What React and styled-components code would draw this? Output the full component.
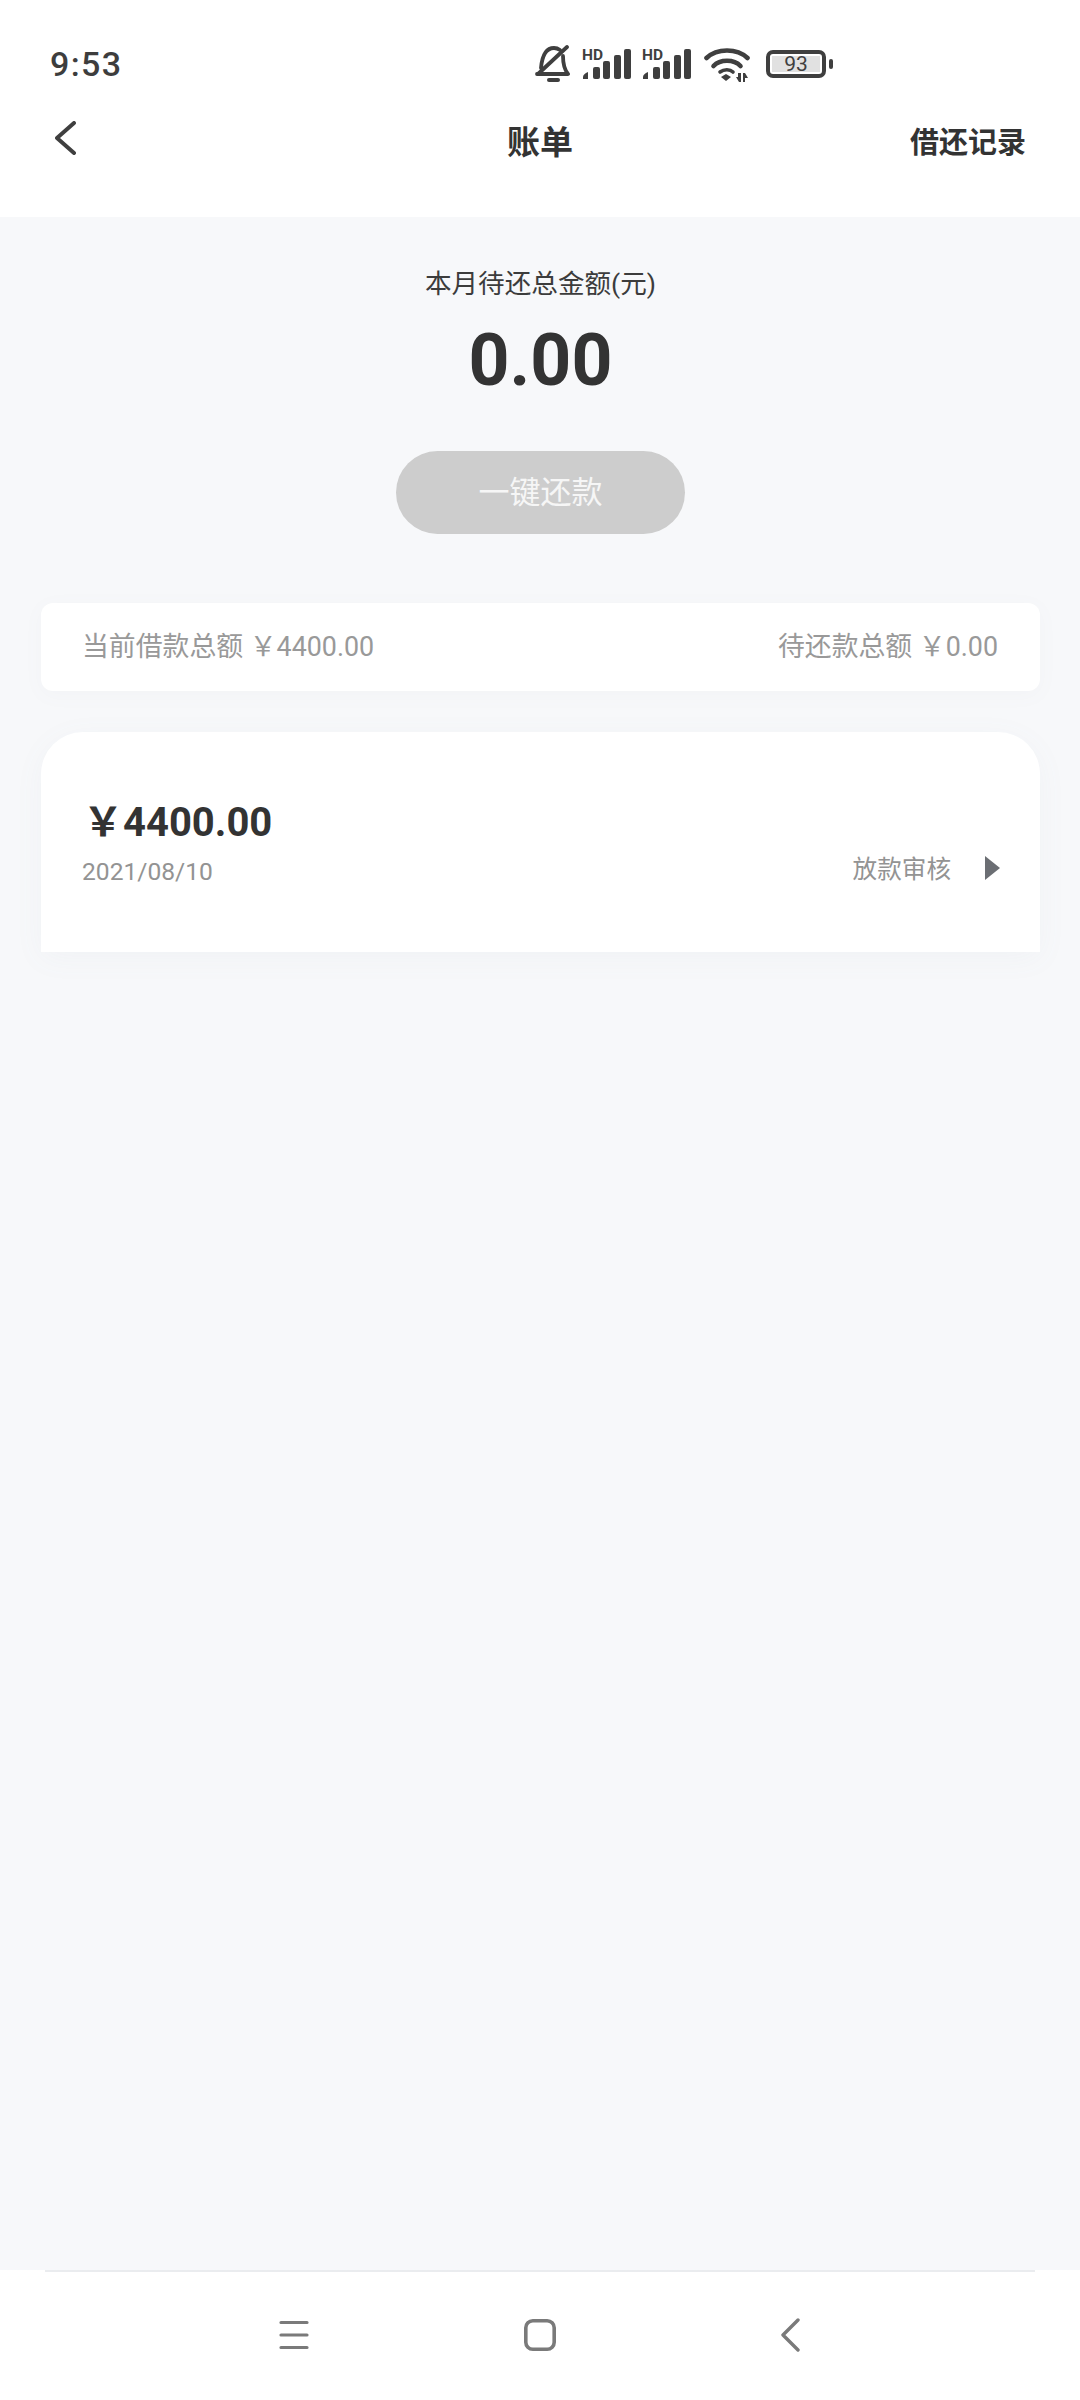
import React from "react";
import styled, { createGlobalStyle } from "styled-components";

const Global = createGlobalStyle`
  html, body { margin: 0; padding: 0; background: #f7f8fa; }
  body { font-family: Roboto, "Noto Sans CJK SC", sans-serif; }
  * { box-sizing: border-box; }
`;
const Screen = styled.div`
  width: 1080px; height: 2400px; display: flex; flex-direction: column; background: #f7f8fa; overflow: hidden;
`;
const TopArea = styled.header`
  height: 217px; background: #fff; padding: 0 54px; flex: none;
`;
const StatusBar = styled.div`
  height: 94px; padding-top: 42px; display: flex; align-items: flex-start;
`;
const Time = styled.span`
  margin-left: -4px; font: 500 34px/44px Roboto, sans-serif; color: #3d3d3d; letter-spacing: 1.4px;
`;
const StatusIcons = styled.div`
  margin: 0 200px 0 auto; display: flex; align-items: center; height: 44px;
`;
const IconSlot = styled.span`
  display: flex; margin-left: ${(p) => p.$gap}px;
`;
const NavRow = styled.div`
  display: grid; grid-template-columns: 1fr auto 1fr; align-items: center; height: 98px;
`;
const BackButton = styled.div` display: flex; margin: 0 0 10px 1px; `;
const Title = styled.h1`
  margin: 0; font: 700 33px/46px Roboto, "Noto Sans CJK SC", sans-serif; color: #333;
`;
const RecordLink = styled.span`
  justify-self: end; font: 700 29px/46px Roboto, "Noto Sans CJK SC", sans-serif; color: #333;
`;
const Main = styled.main`
  flex: 1; padding: 0 40px 0 41px; display: flex; flex-direction: column;
`;
const Summary = styled.section`
  display: flex; flex-direction: column; align-items: center; padding-top: 48px;
`;
const SummaryLabel = styled.div`
  font: 400 26.6px/38px Roboto, "Noto Sans CJK SC", sans-serif; color: #3c3c3c;
`;
const SummaryValue = styled.div`
  font: 700 71.5px/84px Roboto, sans-serif; color: #333; margin-top: 16px;
`;
const PayButton = styled.button`
  width: 289px; height: 83px; margin-top: 48px; border: 0; border-radius: 42px; background: #cdcdcd; color: #f6f6f6;
  font: 400 31px/83px Roboto, "Noto Sans CJK SC", sans-serif; padding: 0;
`;
const InfoBar = styled.section`
  margin-top: 69px; height: 88px; background: #fff; border-radius: 12px; padding: 0 42px 0 41px; display: flex; align-items: center; justify-content: space-between;
  font: 400 26.85px/38px Roboto, "Noto Sans CJK SC", sans-serif; color: #999;
  box-shadow: 0 4px 20px rgba(120, 130, 150, 0.04);
`;
const LoanCard = styled.article`
  margin-top: 41px; height: 220px; background: #fff; border-radius: 42px 42px 0 0; padding: 66px 40px 0 41px; display: flex; justify-content: space-between;
  box-shadow: 0 6px 30px rgba(120, 130, 150, 0.05);
`;
const LoanAmount = styled.div`
  font: 700 40px/50px Roboto, "Noto Sans CJK SC", sans-serif; color: #333; padding-left: 1px;
`;
const LoanDate = styled.div`
  font: 400 24.6px/34px Roboto, sans-serif; color: #939393; margin-top: 7px;
`;
const LoanStatus = styled.div`
  display: flex; align-items: center; gap: 34px; align-self: flex-start; margin-top: 55px;
  font: 400 24.6px/34px Roboto, "Noto Sans CJK SC", sans-serif; color: #939393;
`;
const Triangle = styled.svg` width: 15px; height: 24px; margin-top: -4px; display: block; `;
const BottomNav = styled.nav`
  height: 130px; flex: none; background: #fff; position: relative; display: flex; align-items: center; padding: 0 280px 0 279px; justify-content: space-between;
  &::before { content: ""; position: absolute; left: 45px; right: 45px; top: 0; height: 2px; background: #eaecef; }
`;
const HomeIcon = styled.svg` margin-right: 10px; display: block; `;

const Bell = () => (
  <svg width="36" height="38" viewBox="0 0 36 38" fill="none" stroke="#3f3f3f" strokeWidth="3.8" strokeLinecap="round" strokeLinejoin="round">
    <path d="M7 23C8 12 11 3 20 3c2 0 4 .6 6 2" />
    <path d="M29 11c0 8 1 13 5 18H3" />
    <path d="M33 2 4 29" />
    <path d="M15 35h9" strokeWidth="4" />
  </svg>
);
const Signal = () => (
  <svg width="50" height="36" viewBox="0 0 50 36" fill="#3f3f3f">
    <text x="1" y="14" fontFamily="Roboto, sans-serif" fontWeight="700" fontSize="15.5">HD</text>
    <path d="M2 33v-2c0-2 2-4 5-5v7z" />
    <rect x="12" y="21" width="7" height="12" rx="2" />
    <rect x="22" y="15" width="7" height="18" rx="2" />
    <rect x="33" y="9" width="7" height="24" rx="2" />
    <rect x="43" y="3" width="7" height="30" rx="2" />
  </svg>
);
const Wifi = () => (
  <svg width="46" height="36" viewBox="0 0 46 36" fill="none" stroke="#3f3f3f" strokeWidth="4.6" strokeLinecap="round">
    <path d="M2.5 12C13 2 33 2 43.5 12" />
    <path d="M9.5 20C16 13 30 13 36.5 20" />
    <path d="M16 26c4-3 10-3 13 0" strokeWidth="3.6" />
    <path d="M17 31l5-3 5 3-5 4z" fill="#3f3f3f" stroke="none" />
    <path d="M32 31h2v-4h3v9h-2zM39 27h2l3 5h-3v4h-2z" fill="#3f3f3f" stroke="none" />
  </svg>
);
const BatteryFrame = styled.div`
  margin-left: 16px; width: 60px; height: 28px; border: 4px solid #3f3f3f; border-radius: 7px; padding: 2px; position: relative;
  &::after { content: ""; position: absolute; right: -11px; top: 5px; width: 4px; height: 10px; border-radius: 2px; background: #3f3f3f; }
`;
const BatteryLevel = styled.div`
  height: 100%; background: #e1e1e1; font: 400 21px/16px Roboto, sans-serif; color: #3f3f3f; text-align: center;
`;
const Chevron = ({ size = 34, color = "#3f3f3f", w = 21, sw = 4 }) => (
  <svg width={w} height={size} viewBox={`0 0 ${w} ${size}`} fill="none" stroke={color} strokeWidth={sw} strokeLinecap="round" strokeLinejoin="round">
    <path d={`M${w - 2} 2 L2 ${size / 2} L${w - 2} ${size - 2}`} />
  </svg>
);

export default function App() {
  return (
    <Screen>
      <Global />
      <TopArea>
        <StatusBar>
          <Time>9:53</Time>
          <StatusIcons>
            <Bell />
            <IconSlot $gap={11}><Signal /></IconSlot>
            <IconSlot $gap={10}><Signal /></IconSlot>
            <IconSlot $gap={13}><Wifi /></IconSlot>
            <BatteryFrame><BatteryLevel>93</BatteryLevel></BatteryFrame>
          </StatusIcons>
        </StatusBar>
        <NavRow>
          <BackButton><Chevron /></BackButton>
          <Title>账单</Title>
          <RecordLink>借还记录</RecordLink>
        </NavRow>
      </TopArea>
      <Main>
        <Summary>
          <SummaryLabel>本月待还总金额(元)</SummaryLabel>
          <SummaryValue>0.00</SummaryValue>
          <PayButton>一键还款</PayButton>
        </Summary>
        <InfoBar>
          <span>当前借款总额 ￥4400.00</span>
          <span>待还款总额 ￥0.00</span>
        </InfoBar>
        <LoanCard>
          <div>
            <LoanAmount>￥4400.00</LoanAmount>
            <LoanDate>2021/08/10</LoanDate>
          </div>
          <LoanStatus>
            放款审核
            <Triangle viewBox="0 0 15 24"><path d="M0 0 L15 12 L0 24 Z" fill="#6b6e73" /></Triangle>
          </LoanStatus>
        </LoanCard>
      </Main>
      <BottomNav>
        <svg width="30" height="30" viewBox="0 0 30 30" stroke="#7a7a7a" strokeWidth="3.2" strokeLinecap="round">
          <path d="M2 2.5h26M2 15h26M2 27.5h26" />
        </svg>
        <HomeIcon width="32" height="32" viewBox="0 0 32 32" fill="none" stroke="#7a7a7a" strokeWidth="3.6">
          <rect x="1.8" y="1.8" width="28.4" height="28.4" rx="7" />
        </HomeIcon>
        <Chevron size={34} w={19} color="#7a7a7a" sw={3.4} />
      </BottomNav>
    </Screen>
  );
}
